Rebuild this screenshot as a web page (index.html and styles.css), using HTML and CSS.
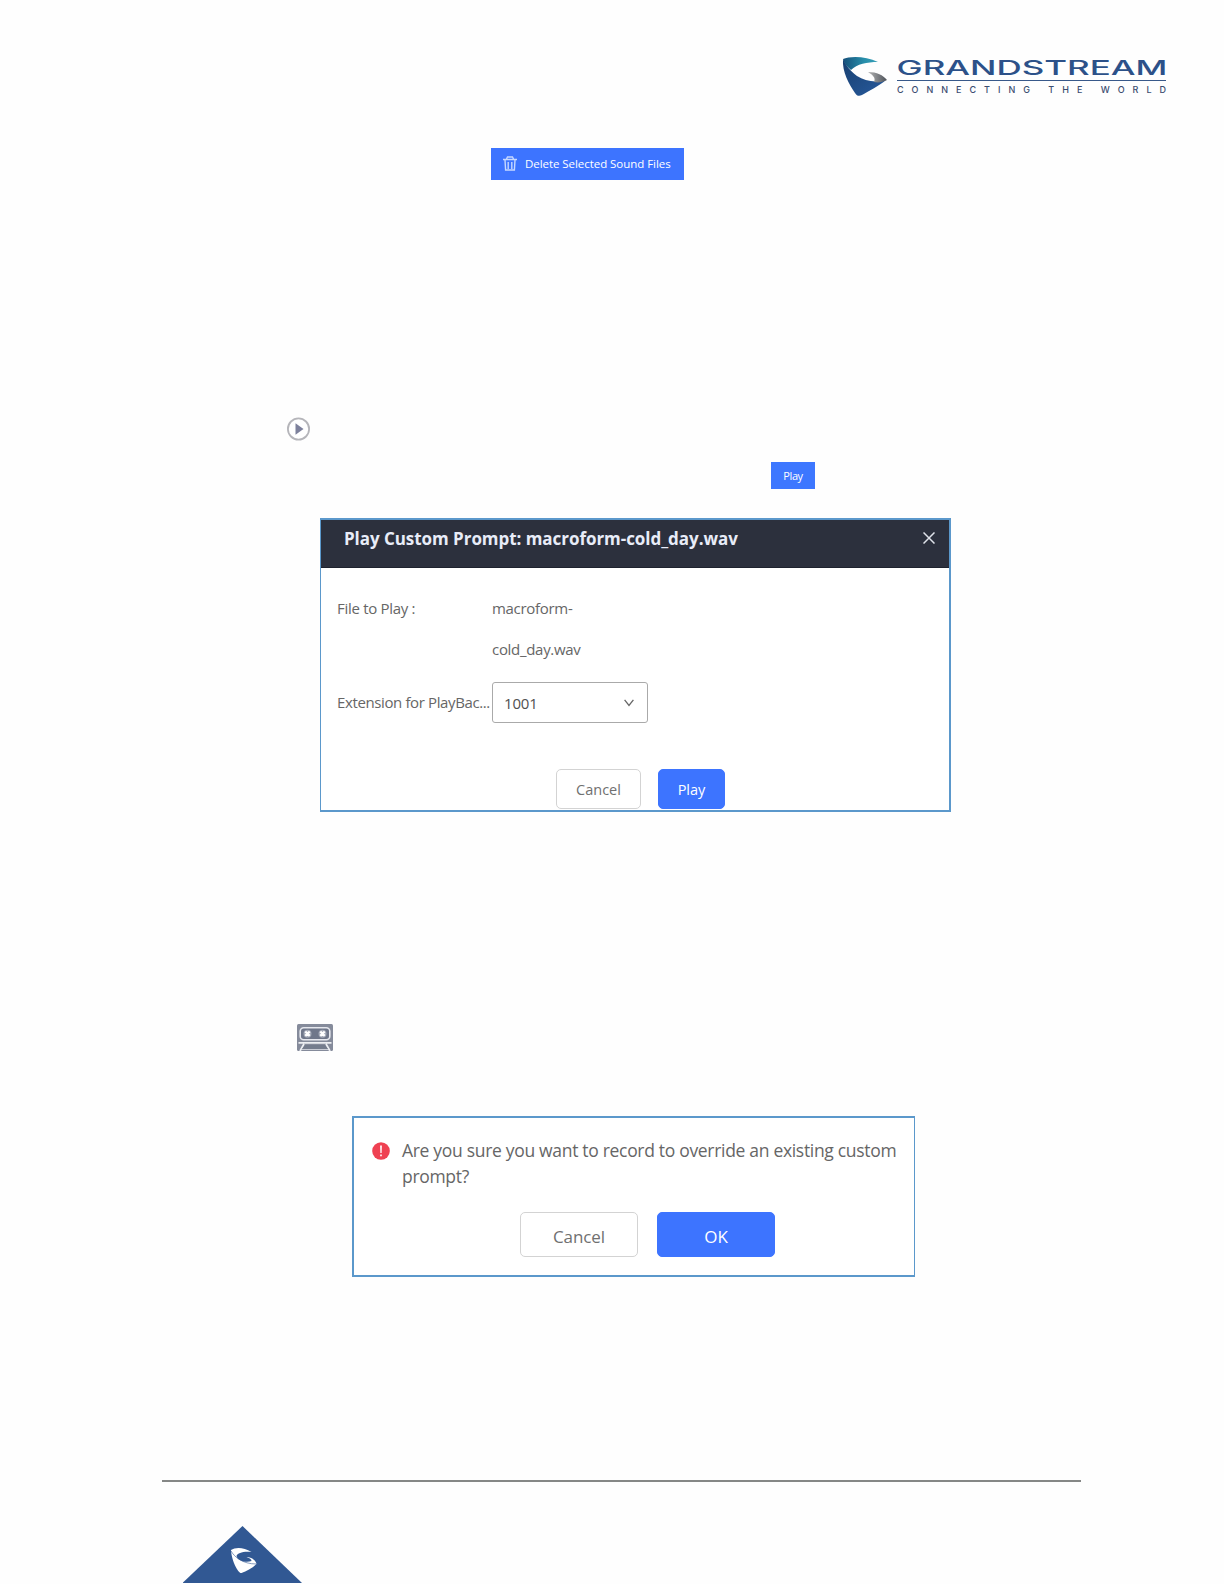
FILE: index.html
```
<!DOCTYPE html>
<html lang="en">
<head>
    <meta charset="UTF-8">
    <meta name="viewport" content="width=device-width, initial-scale=1.0">
    <title>Custom Prompt</title>
    <link rel="stylesheet" href="styles.css">
</head>
<body>
    <div class="page">
        <header class="brand">
            <svg class="brand-logo" width="326" height="44" viewBox="0 0 326 44">
                <defs>
                    <linearGradient id="teal" x1="0" y1="0" x2="1" y2="0">
                        <stop offset="0" stop-color="#164f79"/>
                        <stop offset="0.6" stop-color="#278eaa"/>
                        <stop offset="1" stop-color="#38a0b8"/>
                    </linearGradient>
                    <linearGradient id="navy" x1="0" y1="0" x2="1" y2="1">
                        <stop offset="0" stop-color="#183f70"/>
                        <stop offset="1" stop-color="#285b9e"/>
                    </linearGradient>
                    <linearGradient id="steel" x1="0" y1="0" x2="1" y2="0">
                        <stop offset="0" stop-color="#b5b5b5"/>
                        <stop offset="1" stop-color="#4c5158"/>
                    </linearGradient>
                </defs>
                <path fill="url(#navy)" d="M1 4C4 10 8 16 15 21C23 26 33 28 44 25C37 31 27 36 20 40C17 41.5 15 41 13 38C7 29 0 17 1 4Z"/>
                <path fill="url(#teal)" d="M1 4C8 1 24 1 36 7C25 7 15 9 9 15C5 12 2 8 1 4Z"/>
                <path fill="url(#steel)" d="M26 17C35 17 41 20 45 25C41 27 37 28 32 27C34 23 31 20 26 17Z"/>
                <text class="brand-name" x="54.5" y="20" textLength="271" lengthAdjust="spacingAndGlyphs">GRANDSTREAM</text>
                <path stroke="#38598a" d="M55 25.5H324"/>
                <text class="brand-tag" x="55" y="37.5" textLength="269" lengthAdjust="spacing">CONNECTING THE WORLD</text>
            </svg>
        </header>

        <div class="delete-row">
            <button class="delete-button">
                <svg width="14" height="15" viewBox="0 0 14 15" fill="none" stroke="#c6d8ff" stroke-width="1.4">
                    <path d="M0 3.5H14M3.5 3L4.5 1H9.5L10.5 3M2 4L2.6 14H11.4L12 4M5.2 6V13M8.8 6V13"/>
                </svg>
                Delete Selected Sound Files
            </button>
        </div>

        <div class="play-icon-row">
            <svg width="24" height="24" viewBox="0 0 24 24">
                <circle cx="11.5" cy="12" r="10.6" fill="#fff" stroke="#b5b5ba" stroke-width="1.8"/>
                <path fill="#7d819c" d="M8.5 6.2L16.5 12L8.5 17.8Z"/>
            </svg>
        </div>

        <div class="play-row">
            <button class="small-play">Play</button>
        </div>

        <section class="dialog">
            <div class="dialog-header">
                <h2>Play Custom Prompt: macroform-cold_day.wav</h2>
                <svg width="12" height="12" viewBox="0 0 12 12" stroke="#dfe2ea" stroke-width="1.5">
                    <path d="M.5 .5L11.5 11.5M11.5 .5L.5 11.5"/>
                </svg>
            </div>
            <div class="dialog-body">
                <div class="field field-file">
                    <label>File to Play :</label>
                    <div class="file-name">macroform-<br>cold_day.wav</div>
                </div>
                <div class="field field-extension">
                    <label>Extension for PlayBac...</label>
                    <div class="select">
                        <span>1001</span>
                        <svg width="10" height="8" viewBox="0 0 10 8" fill="none" stroke="#666" stroke-width="1.3">
                            <path d="M.6 .8L5 6.5L9.4 .8"/>
                        </svg>
                    </div>
                </div>
            </div>
            <div class="dialog-footer">
                <button class="btn">Cancel</button>
                <button class="btn btn-primary">Play</button>
            </div>
        </section>

        <div class="record-row">
            <!-- cassette -->
            <svg width="36" height="27" viewBox="0 0 36 27">
                <rect width="36" height="27" rx="1.5" fill="#858b9b"/>
                <rect x="3.2" y="3.8" width="29.6" height="12" rx="3.5" fill="#6f778a" stroke="#e6e8ee" stroke-width="1.6"/>
                <circle cx="10.5" cy="9.7" r="4" fill="#a3a9b7"/>
                <circle cx="25.5" cy="9.7" r="4" fill="#a3a9b7"/>
                <path stroke="#fff" stroke-width="2.2" d="M8.3 7.5L12.7 11.9M12.7 7.5L8.3 11.9M23.3 7.5L27.7 11.9M27.7 7.5L23.3 11.9"/>
                <path fill="none" stroke="#eceef2" stroke-width="1.8" d="M1.5 18.8H34.5M3 27L7 20M33 27L29 20"/>
                <path fill="#747c8d" d="M8 21H28L31 25H5Z"/>
                <path stroke="#c9ccd5" d="M5 25.5H31"/>
            </svg>
        </div>

        <section class="confirm">
            <div class="confirm-message">
                <svg width="18" height="18" viewBox="0 0 18 18">
                    <circle cx="9" cy="9" r="8.8" fill="#ef4152"/>
                    <path fill="#ffe9ec" d="M8 3.5H10L9.7 11H8.3ZM8.1 12.5H9.9V14.3H8.1Z"/>
                </svg>
                <p>Are you sure you want to record to override an existing custom prompt?</p>
            </div>
            <div class="confirm-buttons">
                <button class="btn">Cancel</button>
                <button class="btn btn-primary">OK</button>
            </div>
        </section>

        <footer class="page-footer">
            <svg class="corner" width="120" height="58" viewBox="0 0 120 58">
                <path fill="#315893" d="M59.5 0L119 57H-.5Z"/>
                <path fill="#fff" d="M48 24C52.5 21 60.5 21 68.5 26C60.5 25 54.5 27 53.5 30C54.5 35 63.5 37 68.5 35C68.5 33 66.5 32 63.5 31C68.5 31 72.5 34 73.5 38C69.5 42 63.5 45 58.5 47C55.5 48 48.5 35 48 24Z"/>
                <path fill="none" stroke="#315893" stroke-width=".6" d="M48 25C51.5 31 59.5 38 73.5 38"/>
            </svg>
        </footer>
    </div>
</body>
</html>
```
FILE: styles.css
```
body {
    margin: 0;
    background-color: #fefefe;
    font-family: "Open Sans", "Noto Sans", sans-serif;
    color: #666;
}

.page {
    display: flex;
    flex-direction: column;
    height: 1584px;
    overflow: hidden;
}

svg {
    display: block;
    flex-shrink: 0;
}

button {
    box-sizing: border-box;
    padding: 0;
    border: none;
    font-family: inherit;
    white-space: nowrap;
}

.brand {
    display: flex;
    justify-content: flex-end;
    padding: 55px 56px 49px 0;
}

.brand-logo {
    overflow: visible;
}

.brand-name {
    font-family: Inter, sans-serif;
    font-size: 19.5px;
    font-weight: 500;
    fill: #2c5189;
}

.brand-tag {
    font-family: Inter, sans-serif;
    font-size: 9px;
    font-weight: 500;
    fill: #3b4d70;
}

.delete-row {
    padding-left: 491px;
}

.delete-button {
    display: flex;
    align-items: center;
    gap: 8px;
    width: 193px;
    height: 32px;
    padding: 0 0 1px 12px;
    background-color: #3d74ff;
    color: #fff;
    font-size: 11.5px;
    font-weight: 500;
    letter-spacing: -0.05px;
}

.play-icon-row {
    padding: 237px 0 0 287px;
}

.play-row {
    display: flex;
    padding: 21px 0 29px 771px;
}

.small-play {
    width: 44px;
    height: 27px;
    background-color: #3d77ff;
    color: #fff;
    font-size: 11px;
    font-weight: 500;
    letter-spacing: -0.4px;
}

.dialog {
    box-sizing: border-box;
    width: 631px;
    height: 294px;
    margin-left: 320px;
    border: 2px solid #5b98cb;
    border-left-width: 1px;
    background-color: #fff;
    font-size: 15px;
}

.dialog-header {
    box-sizing: border-box;
    display: flex;
    justify-content: space-between;
    height: 48px;
    padding: 12px 14px 0 23px;
    border-bottom: 1px solid #1e222e;
    background-color: #2c303d;
    color: #e8ecf8;
}

.dialog-header h2 {
    margin: -6px 0 0;
    font-size: 17px;
    line-height: 25px;
    letter-spacing: -0.05px;
}

.dialog-body {
    padding: 20px 0 0 16px;
}

.field {
    display: flex;
    letter-spacing: -0.3px;
}

.field label {
    width: 155px;
    white-space: nowrap;
}

.field-file {
    line-height: 40.5px;
}

.field-extension {
    margin-top: 13px;
    line-height: 40px;
}

.field-extension label {
    letter-spacing: -0.38px;
}

.select {
    box-sizing: border-box;
    display: flex;
    align-items: center;
    justify-content: space-between;
    width: 156px;
    height: 41px;
    padding: 0 13px 0 11px;
    border: 1px solid #aaa;
    border-radius: 3px;
    color: #505050;
    letter-spacing: -0.2px;
}

.dialog-footer {
    display: flex;
    gap: 17px;
    padding: 46px 0 0 235px;
}

.btn {
    width: 85px;
    height: 40px;
    border: 1px solid #d3d3d3;
    border-radius: 5px;
    background-color: #fff;
    color: #707070;
    font-size: 14.5px;
}

.btn-primary {
    width: 67px;
    border-color: #3d74ff;
    background-color: #3d74ff;
    color: #fff;
    font-weight: 500;
}

.record-row {
    padding: 212px 0 65px 297px;
}

.confirm {
    box-sizing: border-box;
    width: 563px;
    height: 161px;
    margin-left: 352px;
    padding-top: 19px;
    border: 2px solid #5b98cb;
    border-right-width: 1px;
    background-color: #fff;
}

.confirm-message {
    display: flex;
    gap: 12px;
    padding: 0 8px 0 18px;
}

.confirm-message svg {
    margin-top: 5px;
}

.confirm-message p {
    margin: 0;
    font-size: 17.5px;
    line-height: 26px;
    letter-spacing: -0.31px;
}

.confirm-buttons {
    display: flex;
    gap: 19px;
    padding: 23px 0 0 166px;
}

.confirm-buttons .btn {
    width: 118px;
    height: 45px;
    padding: 3px 0 0;
    font-size: 17px;
    font-weight: 400;
    letter-spacing: -0.1px;
}

.page-footer {
    width: 919px;
    margin: 203px 0 0 162px;
    border-top: 2px solid #858786;
}

.corner {
    margin: 44px 0 0 21px;
}
```
